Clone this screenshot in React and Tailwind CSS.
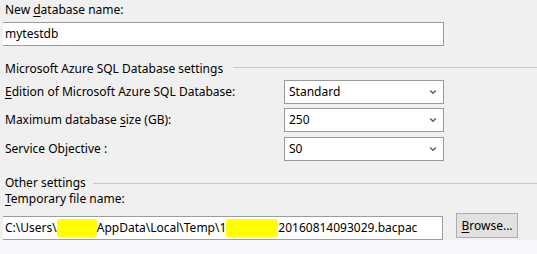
import React from "react";

function Chevron() {
  return (
    <svg width="8" height="6" viewBox="0 0 8 6" className="shrink-0">
      <polyline points="1.2,1.5 4,4.3 6.8,1.5" fill="none" stroke="#606060" strokeWidth="1.5" />
    </svg>
  );
}

function Select({ value }) {
  return (
    <div className="w-[160px] h-[24px] bg-white border border-[#9a9a9a] flex items-center justify-between pl-[4px] pr-[6px]">
      <span>{value}</span>
      <Chevron />
    </div>
  );
}

function Hl({ w }) {
  return <span className="inline-block h-[18px] bg-[#ffff00] rounded-[3px] align-middle" style={{ width: w }} />;
}

export default function App() {
  return (
    <div
      className="w-[537px] h-[254px] bg-[#f0f0f0] flex flex-col text-[12px] text-black overflow-hidden"
      style={{ fontFamily: '"Noto Sans", "Liberation Sans", sans-serif' }}
    >
      <div className="h-[20px] flex items-center pl-[5px]">
        <span>New <u className="underline-offset-2">d</u>atabase name:</span>
      </div>
      <div className="mt-[2px] ml-[3px] w-[441px] h-[24px] bg-white border border-[#9c9c9c] border-l-0 flex items-center pl-[2px]">
        mytestdb
      </div>

      <div className="mt-[13px] h-[20px] flex items-center pl-[5px]">
        <span className="shrink-0">Microsoft Azure SQL Database settings</span>
        <div className="flex-1 ml-[10px] h-px bg-[#c8c8c8] -translate-y-[2px]" />
      </div>

      <div className="mt-[1px] flex items-center">
        <div className="w-[284px] pl-[5px]">
          <u className="underline-offset-2">E</u>dition of Microsoft Azure SQL Database:
        </div>
        <Select value="Standard" />
      </div>
      <div className="mt-[4px] flex items-center">
        <div className="w-[284px] pl-[5px]">
          Maximum database <u className="underline-offset-2">s</u>ize (GB):
        </div>
        <Select value="250" />
      </div>
      <div className="mt-[5px] flex items-center">
        <div className="w-[284px] pl-[5px]">Service Objective :</div>
        <Select value="S0" />
      </div>

      <div className="mt-[15px] h-[14px] leading-[14px] flex items-center pl-[5px]">
        <span className="shrink-0">Other settings</span>
        <div className="flex-1 ml-[7px] h-px bg-[#c8c8c8]" />
      </div>
      <div className="mt-[2px] h-[14px] leading-[14px] flex items-center pl-[5px]">
        <span>
          <u className="underline-offset-2">T</u>emporary file name:
        </span>
      </div>

      <div className="mt-[7px] flex items-start">
        <div className="mt-[3px] ml-[3px] w-[440px] h-[24px] bg-white border border-[#9c9c9c] border-l-0 flex items-center pl-[2px] whitespace-nowrap overflow-hidden">
          <span>C:\Users\</span>
          <Hl w={40} />
          <span>AppData\Local\Temp\1</span>
          <Hl w={52} />
          <span>20160814093029.bacpac</span>
        </div>
        <div className="ml-[13px] w-[62px] h-[25px] bg-[#e1e1e1] border border-[#adadad] flex items-center justify-center">
          <span>
            <u className="underline-offset-2">B</u>rowse...
          </span>
        </div>
      </div>
      <div className="flex-1 bg-[#f5f7fa]" />
    </div>
  );
}
